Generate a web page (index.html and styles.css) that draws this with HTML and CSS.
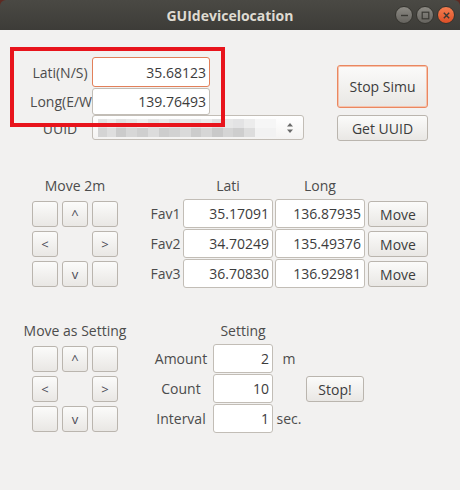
FILE: index.html
```html
<!DOCTYPE html>
<html>
<head>
<meta charset="utf-8">
<link rel="stylesheet" href="styles.css">
</head>
<body>
<div class="window">
  <header class="titlebar">
    <span class="title">GUIdevicelocation</span>
    <div class="wm">
      <span class="wm-btn"><svg width="9" height="9" viewBox="0 0 9 9"><path d="M1 4.5h7" stroke="#3a3934" stroke-width="1.4"/></svg></span>
      <span class="wm-btn"><svg width="9" height="9" viewBox="0 0 9 9"><rect x="1.2" y="1.2" width="6.6" height="6.6" fill="none" stroke="#3a3934" stroke-width="1.2"/></svg></span>
      <span class="wm-btn wm-close"><svg width="9" height="9" viewBox="0 0 9 9"><path d="M1.8 1.8l5.4 5.4M7.2 1.8l-5.4 5.4" stroke="#3a3934" stroke-width="1.4"/></svg></span>
    </div>
  </header>
  <main class="content">
    <section class="top">
      <label class="lbl lbl-c r1">Lati(N/S)</label>
      <input class="entry entry-focus r1 c2" value="35.68123" readonly>
      <button class="btn btn-focus stop-simu">Stop Simu</button>
      <label class="lbl lbl-r r2">Long(E/W</label>
      <input class="entry long r2 c2" value="139.76493" readonly>
      <label class="lbl lbl-c r3">UUID</label>
      <div class="combo r3">
        <div class="blur">
          <span class="blur-row blur-a"></span>
          <span class="blur-row blur-b"></span>
        </div>
        <svg class="combo-arrows" width="8" height="14" viewBox="0 0 8 14"><path d="M4 2L7 5.5H1z M4 12L1 8.5H7z" fill="#6a6a6a"/></svg>
      </div>
      <button class="btn get-uuid r3">Get UUID</button>
    </section>

    <section class="block mid">
      <div class="pad">
        <div class="head pad-head">Move 2m</div>
        <button class="btn pbtn"></button><button class="btn pbtn">^</button><button class="btn pbtn"></button>
        <button class="btn pbtn">&lt;</button><span></span><button class="btn pbtn">&gt;</button>
        <button class="btn pbtn"></button><button class="btn pbtn">v</button><button class="btn pbtn"></button>
      </div>
      <div class="fav">
        <span></span><div class="head">Lati</div><div class="head">Long</div><span></span>
        <label class="lbl lbl-c">Fav1</label>
        <input class="entry" value="35.17091" readonly>
        <input class="entry" value="136.87935" readonly>
        <button class="btn move">Move</button>
        <label class="lbl lbl-c">Fav2</label>
        <input class="entry" value="34.70249" readonly>
        <input class="entry" value="135.49376" readonly>
        <button class="btn move">Move</button>
        <label class="lbl lbl-c">Fav3</label>
        <input class="entry" value="36.70830" readonly>
        <input class="entry" value="136.92981" readonly>
        <button class="btn move">Move</button>
      </div>
    </section>

    <section class="block bottom">
      <div class="pad">
        <div class="head pad-head">Move as Setting</div>
        <button class="btn pbtn"></button><button class="btn pbtn">^</button><button class="btn pbtn"></button>
        <button class="btn pbtn">&lt;</button><span></span><button class="btn pbtn">&gt;</button>
        <button class="btn pbtn"></button><button class="btn pbtn">v</button><button class="btn pbtn"></button>
      </div>
      <div class="setting">
        <span></span><div class="head">Setting</div><span></span><span></span>
        <label class="lbl lbl-c">Amount</label>
        <input class="entry" value="2" readonly>
        <span class="unit">m</span>
        <span></span>
        <label class="lbl lbl-c">Count</label>
        <input class="entry" value="10" readonly>
        <span></span>
        <button class="btn stop">Stop!</button>
        <label class="lbl lbl-c">Interval</label>
        <input class="entry" value="1" readonly>
        <span class="unit">sec.</span>
        <span></span>
      </div>
    </section>

    <div class="annotation"></div>
  </main>
</div>
</body>
</html>
```

FILE: styles.css
```css
html, body {
  margin: 0;
  padding: 0;
}
body {
  width: 460px;
  height: 490px;
  overflow: hidden;
  background: #5e2a22;
  font-family: "Open Sans", "DejaVu Sans", sans-serif;
  font-size: 14px;
  color: #4c4c4c;
}
.window {
  width: 460px;
  height: 490px;
  display: flex;
  flex-direction: column;
}
.titlebar {
  height: 30px;
  flex: none;
  border-radius: 6px 6px 0 0;
  background: linear-gradient(#4a4944, #3d3c38);
  display: grid;
  grid-template-columns: 1fr auto 1fr;
  align-items: center;
}
.title {
  grid-column: 2;
  color: #dfdbd2;
  font-weight: bold;
  font-size: 14px;
}
.wm {
  grid-column: 3;
  justify-self: end;
  display: flex;
  gap: 3px;
  padding-right: 5px;
}
.wm-btn {
  width: 16px;
  height: 16px;
  border-radius: 50%;
  border: 1px solid #35342f;
  background: linear-gradient(#8c8a84, #65635e);
  display: flex;
  align-items: center;
  justify-content: center;
}
.wm-close {
  background: linear-gradient(#f57e50, #dd4f27);
}
.content {
  flex: 1;
  background: #f2f1f0;
  position: relative;
}

/* generic controls */
.lbl {
  display: flex;
  align-items: center;
  white-space: nowrap;
  color: #4c4c4c;
}
.lbl-c { justify-content: center; }
.lbl-r { justify-content: flex-end; overflow: hidden; }
.entry {
  box-sizing: border-box;
  width: 100%;
  height: 29px;
  margin: 0;
  padding: 0 3px 0 4px;
  border: 1px solid #c2bdb6;
  border-radius: 3px;
  background: #fff;
  font: inherit;
  color: #3c3c3c;
  text-align: right;
  outline: none;
}
.entry-focus {
  border-color: #e2805a;
}
.btn {
  box-sizing: border-box;
  margin: 0;
  padding: 0;
  border: 1px solid #bab5ae;
  border-radius: 3px;
  background: linear-gradient(#fbfbfa, #e9e7e4);
  font: inherit;
  color: #3c3c3c;
}
.btn-focus {
  border-color: #ea8760;
  box-shadow: inset 0 0 0 1px #f6c3ad;
}

/* top */
.top {
  display: grid;
  grid-template-columns: 64px 118px 94px 33px 91px;
  grid-template-rows: 30px 28px 26px;
  margin: 27px 0 0 28px;
}
.r1 { grid-row: 1; }
.r2 { grid-row: 2; }
.r3 { grid-row: 3; }
.c2 { grid-column: 2; }
.top .lbl { grid-column: 1; }
.top .entry-focus { height: 30px; }
.long { height: 27px; align-self: end; }
.stop-simu {
  grid-column: 5;
  grid-row: 1 / 3;
  height: 43px;
  align-self: center;
}
.combo {
  grid-column: 2 / 4;
  height: 25px;
  box-sizing: border-box;
  border: 1px solid #c2bdb6;
  border-radius: 3px;
  background: linear-gradient(#ffffff, #f4f3f2);
  display: flex;
  align-items: center;
  padding: 0 9px 0 5px;
  gap: 10px;
}
.blur {
  flex: 1;
  height: 18px;
  display: flex;
  flex-direction: column;
}
.blur-row { flex: 1; }
.blur-a {
  background: linear-gradient(90deg,
    #e2e2e2 0 5%, #ebebeb 5% 10%, #e0e0e0 10% 16%, #e6e6e6 16% 22%, #eeeeee 22% 28%,
    #e3e3e3 28% 34%, #e9e9e9 34% 40%, #e1e1e3 40% 46%, #e8e8e8 46% 52%, #e4e4e5 52% 58%,
    #ebebeb 58% 64%, #e0e0e1 64% 70%, #e7e7e7 70% 76%, #e3e3e4 76% 82%, #ececec 82% 88%, #f6f6f6 88%);
}
.blur-b {
  background: linear-gradient(90deg,
    #d4d4d4 0 5%, #dedede 5% 10%, #cbcbcb 10% 16%, #d7d7d7 16% 22%, #cfcfcf 22% 28%,
    #dcdcdc 28% 34%, #cdcdcd 34% 40%, #d2d2d2 40% 46%, #dadada 46% 52%, #cccccc 52% 58%,
    #d6d6d6 58% 64%, #c9c9c9 64% 70%, #d5d5d5 70% 76%, #cecece 76% 82%, #dddddd 82% 88%, #f2f2f2 88%);
}
.combo-arrows { flex: none; }
.get-uuid {
  grid-column: 5;
  height: 26px;
}

/* pads + tables */
.block {
  display: flex;
}
.mid { margin-top: 36px; }
.bottom { margin-top: 33px; }
.head {
  height: 22px;
  line-height: 18px;
  text-align: center;
  white-space: nowrap;
}
.pad {
  margin-left: 32px;
  width: 86px;
  display: grid;
  grid-template-columns: 26px 26px 26px;
  grid-template-rows: 22px 30px 30px 30px;
  column-gap: 4px;
  align-items: center;
}
.pad-head {
  grid-column: 1 / 4;
  justify-self: center;
  align-self: start;
}
.pbtn {
  height: 26px;
  font-size: 13px;
  color: #4a4a55;
}
.fav {
  margin-left: 32px;
  display: grid;
  grid-template-columns: 31px 90px 90px 61px;
  grid-template-rows: 22px 30px 30px 30px;
  column-gap: 2px;
  align-items: start;
}
.fav .lbl { height: 29px; }
.move {
  height: 26px;
  width: 60px;
  justify-self: end;
  margin-top: 2px;
}
.setting {
  margin-left: 34px;
  display: grid;
  grid-template-columns: 58px 60px 26px 59px;
  grid-template-rows: 22px 30px 30px 30px;
  column-gap: 3px;
  align-items: start;
}
.setting .lbl { height: 29px; }
.setting .stop {
  height: 26px;
  margin-left: 1px;
  margin-top: 2px;
}
.unit {
  height: 29px;
  display: flex;
  align-items: center;
  justify-content: center;
  white-space: nowrap;
}

.annotation {
  position: absolute;
  left: 10px;
  top: 17px;
  width: 215px;
  height: 80px;
  box-sizing: border-box;
  border: 4px solid #e8141c;
}
```
